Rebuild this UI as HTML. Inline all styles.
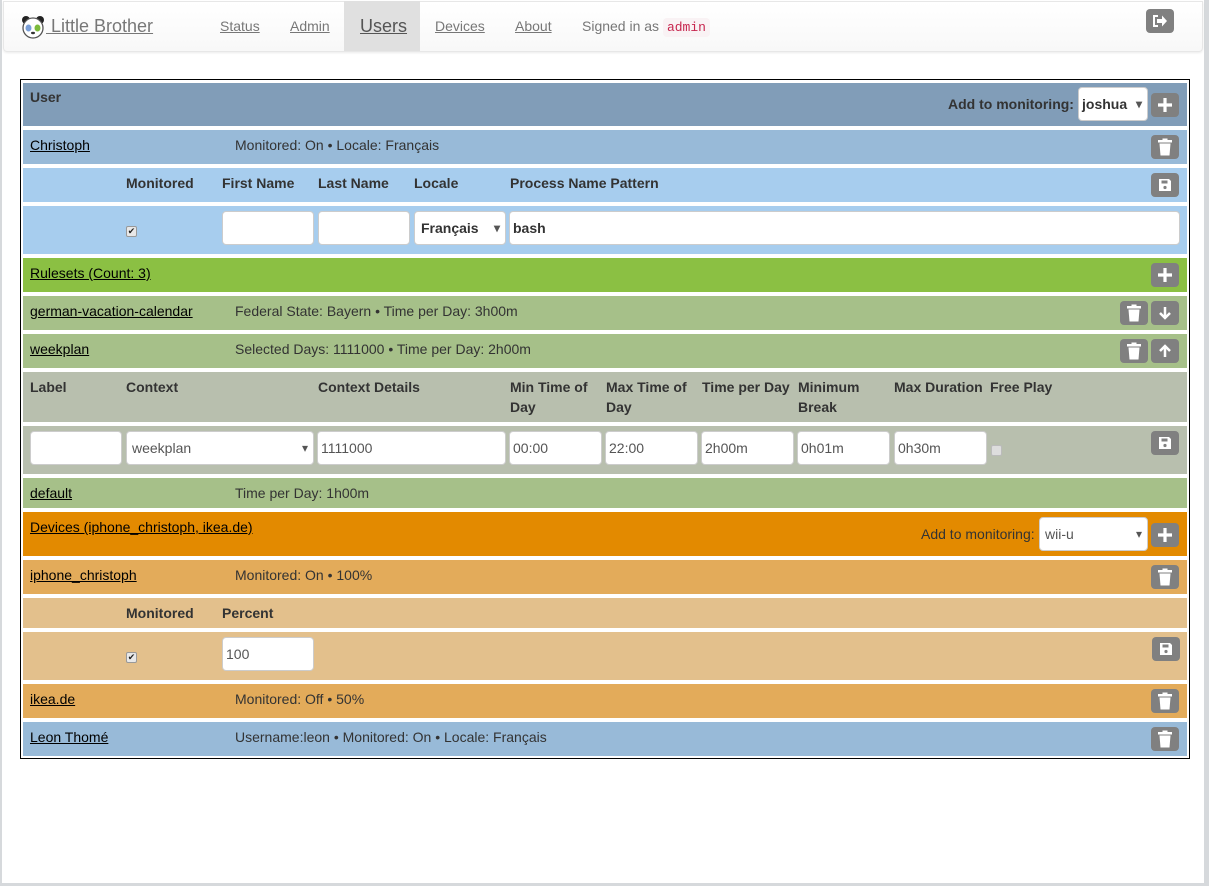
<!DOCTYPE html>
<html><head><meta charset="utf-8"><style>
*{box-sizing:border-box;margin:0;padding:0}
body{width:1209px;height:886px;position:relative;background:#fff;font-family:"Liberation Sans",sans-serif;font-size:14px;color:#333;overflow:hidden}
.a{position:absolute}
.frame{left:0;top:0;width:1209px;height:886px;border-left:2px solid #d6d9dc;border-right:5px solid #d6d9dc;border-bottom:3px solid #d6d9dc}
.nav{left:3px;top:1px;width:1200px;height:51px;background:linear-gradient(#fff,#f8f8f8);border:1px solid #e7e7e7;border-radius:0 0 4px 4px;box-shadow:0 1px 2px rgba(0,0,0,.08)}
.nl{color:#777;text-decoration:underline;font-size:14px;top:18px}
.box{left:20px;top:79px;width:1170px;height:680px;border:1px solid #000}
.r{left:23px;width:1164px}
.lnk{color:#000;text-decoration:underline}
.b{font-weight:bold}
.btn{width:28px;height:24px;background:#808080;border-radius:4px;display:flex;align-items:center;justify-content:center}
.in{background:#fff;border:1px solid #ccc;border-radius:4px;height:34px;padding:0 3px;line-height:32px;color:#555}
.sel:after{content:"▾";position:absolute;right:5px;top:0;font-size:12px;color:#555}
.cb{width:11px;height:11px;border:1px solid #999;border-radius:2px;background:#e8e8e8;font-size:9px;line-height:9px;text-align:center;color:#222}
</style></head><body>
<div class="a frame"></div>
<div class="a nav"></div>
<svg class="a" style="left:21px;top:15px" width="24" height="24" viewBox="0 0 24 24"><circle cx="5" cy="5" r="4" fill="#222"/><circle cx="19" cy="5" r="4" fill="#222"/><circle cx="12" cy="13" r="10" fill="#fff" stroke="#555" stroke-width="1.3"/><ellipse cx="7.5" cy="13" rx="3" ry="3.5" fill="#7a9fd8"/><ellipse cx="16.5" cy="13" rx="3" ry="3.5" fill="#7dbb3c"/><ellipse cx="12" cy="18" rx="2" ry="1.2" fill="#333"/></svg>
<div class="a" style="left:46px;top:16px;font-size:18px;color:#777;text-decoration:underline;white-space:pre"> Little Brother</div>
<a class="a nl" style="left:220px">Status</a>
<a class="a nl" style="left:290px">Admin</a>
<div class="a" style="left:344px;top:1px;width:76px;height:50px;background:#e0e0e0"></div>
<a class="a nl" style="left:360px;top:16px;font-size:18px;color:#555">Users</a>
<a class="a nl" style="left:435px">Devices</a>
<a class="a nl" style="left:515px">About</a>
<div class="a" style="left:582px;top:18px;color:#777">Signed in as <span style="font-family:'Liberation Mono',monospace;font-size:13px;color:#c7254e;background:#f9f2f4;padding:2px 4px;border-radius:4px">admin</span></div>
<div class="a btn" style="left:1146px;top:9px"><svg width="16" height="14" viewBox="0 0 16 14"><path d="M6 2H2v10h4" fill="none" stroke="#fff" stroke-width="2"/><path d="M5 5h5V1.5l5 5.5-5 5.5V9H5z" fill="#fff"/></svg></div>

<div class="a box"></div>
<div class="a r" style="top:83px;height:43px;background:#819db8"></div>
<div class="a b" style="left:30px;top:89px">User</div>
<div class="a b" style="left:948px;top:96px">Add to monitoring:</div>
<div class="a in sel b" style="left:1078px;top:87px;width:70px;color:#333">joshua</div>
<div class="a btn plus" style="left:1151px;top:93px"></div>

<div class="a r" style="top:130px;height:34px;background:#98bad8"></div>
<a class="a lnk" style="left:30px;top:137px">Christoph</a>
<div class="a" style="left:235px;top:137px">Monitored: On • Locale: Français</div>
<div class="a btn trash" style="left:1151px;top:135px"></div>

<div class="a r" style="top:168px;height:34px;background:#a7cdee"></div>
<div class="a b" style="left:126px;top:175px">Monitored</div>
<div class="a b" style="left:222px;top:175px">First Name</div>
<div class="a b" style="left:318px;top:175px">Last Name</div>
<div class="a b" style="left:414px;top:175px">Locale</div>
<div class="a b" style="left:510px;top:175px">Process Name Pattern</div>
<div class="a btn save" style="left:1151px;top:173px"></div>

<div class="a r" style="top:206px;height:48px;background:#a7cdee"></div>
<div class="a cb" style="left:126px;top:226px">✔</div>
<div class="a in" style="left:222px;top:211px;width:92px"></div>
<div class="a in" style="left:318px;top:211px;width:92px"></div>
<div class="a in sel b" style="left:414px;top:211px;width:92px;padding-left:6px;color:#333">Français</div>
<div class="a in b" style="left:509px;top:211px;width:671px;color:#333">bash</div>

<div class="a r" style="top:258px;height:34px;background:#8bc043"></div>
<a class="a lnk" style="left:30px;top:265px">Rulesets (Count: 3)</a>
<div class="a btn plus" style="left:1151px;top:263px"></div>

<div class="a r" style="top:296px;height:34px;background:#a6c089"></div>
<a class="a lnk" style="left:30px;top:303px">german-vacation-calendar</a>
<div class="a" style="left:235px;top:303px">Federal State: Bayern • Time per Day: 3h00m</div>
<div class="a btn trash" style="left:1120px;top:301px"></div>
<div class="a btn" style="left:1151px;top:301px"><svg width="14" height="14"><path d="M7 1v11M2 7l5 5 5-5" fill="none" stroke="#fff" stroke-width="2.5"/></svg></div>

<div class="a r" style="top:334px;height:34px;background:#a6c089"></div>
<a class="a lnk" style="left:30px;top:341px">weekplan</a>
<div class="a" style="left:235px;top:341px">Selected Days: 1111000 • Time per Day: 2h00m</div>
<div class="a btn trash" style="left:1120px;top:339px"></div>
<div class="a btn" style="left:1151px;top:339px"><svg width="14" height="14"><path d="M7 13V2M2 7l5-5 5 5" fill="none" stroke="#fff" stroke-width="2.5"/></svg></div>

<div class="a r" style="top:372px;height:50px;background:#b8bfae"></div>
<div class="a b" style="left:30px;top:379px">Label</div>
<div class="a b" style="left:126px;top:379px">Context</div>
<div class="a b" style="left:318px;top:379px">Context Details</div>
<div class="a b" style="left:510px;top:379px;line-height:20px;margin-top:-2px">Min Time of<br>Day</div>
<div class="a b" style="left:606px;top:379px;line-height:20px;margin-top:-2px">Max Time of<br>Day</div>
<div class="a b" style="left:702px;top:379px">Time per Day</div>
<div class="a b" style="left:798px;top:379px;line-height:20px;margin-top:-2px">Minimum<br>Break</div>
<div class="a b" style="left:894px;top:379px">Max Duration</div>
<div class="a b" style="left:990px;top:379px">Free Play</div>

<div class="a r" style="top:426px;height:48px;background:#b8bfae"></div>
<div class="a in" style="left:30px;top:431px;width:92px"></div>
<div class="a in sel" style="left:126px;top:431px;width:188px;padding-left:5px">weekplan</div>
<div class="a in" style="left:317px;top:431px;width:189px">1111000</div>
<div class="a in" style="left:509px;top:431px;width:93px">00:00</div>
<div class="a in" style="left:605px;top:431px;width:93px">22:00</div>
<div class="a in" style="left:701px;top:431px;width:93px">2h00m</div>
<div class="a in" style="left:797px;top:431px;width:93px">0h01m</div>
<div class="a in" style="left:894px;top:431px;width:93px">0h30m</div>
<div class="a cb" style="left:991px;top:445px;background:#ddd;border-color:#bbb"></div>
<div class="a btn save" style="left:1151px;top:431px"></div>

<div class="a r" style="top:478px;height:30px;background:#a6c089"></div>
<a class="a lnk" style="left:30px;top:485px">default</a>
<div class="a" style="left:235px;top:485px">Time per Day: 1h00m</div>

<div class="a r" style="top:512px;height:44px;background:#e38a00"></div>
<a class="a lnk" style="left:30px;top:519px">Devices (iphone_christoph, ikea.de)</a>
<div class="a" style="left:921px;top:526px">Add to monitoring:</div>
<div class="a in sel" style="left:1039px;top:517px;width:109px;padding-left:5px">wii-u</div>
<div class="a btn plus" style="left:1151px;top:523px"></div>

<div class="a r" style="top:560px;height:34px;background:#e3ab5a"></div>
<a class="a lnk" style="left:30px;top:567px">iphone_christoph</a>
<div class="a" style="left:235px;top:567px">Monitored: On • 100%</div>
<div class="a btn trash" style="left:1151px;top:565px"></div>

<div class="a r" style="top:598px;height:30px;background:#e3c08c"></div>
<div class="a b" style="left:126px;top:605px">Monitored</div>
<div class="a b" style="left:222px;top:605px">Percent</div>

<div class="a r" style="top:632px;height:48px;background:#e3c08c"></div>
<div class="a cb" style="left:126px;top:652px">✔</div>
<div class="a in" style="left:222px;top:637px;width:92px">100</div>
<div class="a btn save" style="left:1152px;top:637px"></div>

<div class="a r" style="top:684px;height:34px;background:#e3ab5a"></div>
<a class="a lnk" style="left:30px;top:691px">ikea.de</a>
<div class="a" style="left:235px;top:691px">Monitored: Off • 50%</div>
<div class="a btn trash" style="left:1151px;top:689px"></div>

<div class="a r" style="top:722px;height:34px;background:#98bad8"></div>
<a class="a lnk" style="left:30px;top:729px">Leon Thomé</a>
<div class="a" style="left:235px;top:729px">Username:leon • Monitored: On • Locale: Français</div>
<div class="a btn trash" style="left:1151px;top:727px"></div>

<script>
document.querySelectorAll('.trash').forEach(e=>e.innerHTML='<svg width="16" height="18" viewBox="0 0 16 18"><path d="M1 2h14v2.5H1zM5.5 0.5h5v2h-5z" fill="#fff"/><path d="M2.5 5.5h11l-1 12h-9z" fill="#fff"/></svg>');
document.querySelectorAll('.save').forEach(e=>e.innerHTML='<svg width="14" height="14" viewBox="0 0 14 14"><path d="M1 1h10l2 2v10H1z" fill="#fff"/><rect x="3.5" y="2.5" width="6" height="3" fill="#808080"/><circle cx="7" cy="9.5" r="1.6" fill="#808080"/></svg>');
document.querySelectorAll('.plus').forEach(e=>e.innerHTML='<svg width="16" height="16"><path d="M8 1v14M1 8h14" stroke="#fff" stroke-width="3.2"/></svg>');
</script>
</body></html>
